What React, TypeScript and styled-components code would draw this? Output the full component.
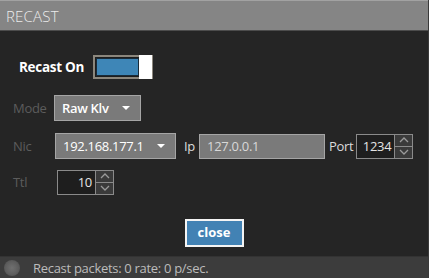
import { FC } from 'react';
import styled, { createGlobalStyle } from 'styled-components';

const GlobalStyle = createGlobalStyle`
    html, body {
        margin: 0;
        padding: 0;
        background: #252525;
    }
    * {
        box-sizing: border-box;
    }
`;

const Window = styled.div`
    width: 429px;
    height: 278px;
    display: flex;
    flex-direction: column;
    background: #252525;
    font-family: 'Open Sans', 'Noto Sans', sans-serif;
    border-right: 1px solid #3a3a3a;
`;

const TitleBar = styled.div`
    height: 31px;
    background: #858585;
    border-top: 1px solid #a2a2a2;
    border-bottom: 1px solid #4c4c4c;
    display: flex;
    align-items: center;
    padding-left: 6px;
    color: #ececec;
    font-size: 15px;
    font-weight: 300;
    letter-spacing: 0.2px;
`;

const Body = styled.div`
    flex: 1;
    display: flex;
    flex-direction: column;
    padding: 24px 0 0 13px;
`;

const ToggleRow = styled.div`
    display: flex;
    align-items: center;
    gap: 9px;
    padding-left: 6px;
    height: 24px;
`;

const ToggleLabel = styled.span`
    color: #ffffff;
    font-weight: 700;
    font-size: 13.5px;
    letter-spacing: -0.3px;
`;

const Toggle = styled.div`
    width: 60px;
    height: 24px;
    border: 2px solid #8c877d;
    background: #1e1e1e;
    padding: 1px;
    display: flex;
`;

const ToggleTrack = styled.div`
    flex: 1;
    background: #3e86b7;
    border: 1px solid #1a2b38;
`;

const ToggleThumb = styled.div`
    width: 13px;
    margin: -3px -2px -3px 0;
    background: #ffffff;
`;

const FormRow = styled.div<{ $top: number }>`
    display: flex;
    align-items: center;
    margin-top: ${(p) => p.$top}px;
    height: 26px;
`;

const Label = styled.span<{ $width?: number; $light?: boolean; $ml?: number; $mr?: number }>`
    width: ${(p) => (p.$width ? `${p.$width}px` : 'auto')};
    margin-left: ${(p) => p.$ml ?? 0}px;
    margin-right: ${(p) => p.$mr ?? 0}px;
    color: ${(p) => (p.$light ? '#dcdcdc' : '#5c5c5c')};
    font-size: 13px;
    letter-spacing: -0.3px;
`;

const Select = styled.div<{ $width: number }>`
    width: ${(p) => p.$width}px;
    height: 26px;
    background: #7a7a7a;
    border: 1px solid #a5a5a5;
    display: flex;
    align-items: center;
    justify-content: space-between;
    padding: 0 10px 0 7px;
    color: #ffffff;
    font-size: 13px;
    letter-spacing: -0.3px;
`;

const SelectText = styled.span<{ $bold?: boolean }>`
    font-weight: ${(p) => (p.$bold ? 600 : 400)};
`;

const Caret = styled.span`
    width: 0;
    height: 0;
    border-left: 4px solid transparent;
    border-right: 4px solid transparent;
    border-top: 4px solid #ffffff;
`;

const TextBox = styled.div<{ $width: number }>`
    width: ${(p) => p.$width}px;
    height: 25px;
    background: #7a7a7a;
    border: 1px solid #a5a5a5;
    display: flex;
    align-items: center;
    padding-left: 7px;
    color: #d8d8d8;
    font-size: 13px;
    letter-spacing: -0.3px;
`;

const Numeric = styled.div<{ $width: number }>`
    width: ${(p) => p.$width}px;
    height: 25px;
    border: 1px solid #8a8a8a;
    background: #1e1e1e;
    display: flex;
`;

const NumericValue = styled.span`
    flex: 1;
    display: flex;
    align-items: center;
    justify-content: flex-end;
    padding-right: 3px;
    color: #e4e4e4;
    font-size: 13px;
    letter-spacing: -0.3px;
`;

const Spinner = styled.div`
    width: 18px;
    display: flex;
    flex-direction: column;
    border-left: 1px solid #8a8a8a;
`;

const SpinButton = styled.div`
    flex: 1;
    background: #3a3a3a;
    display: flex;
    align-items: center;
    justify-content: center;
    & + & {
        border-top: 1px solid #8a8a8a;
    }
`;

const ButtonRow = styled.div`
    display: flex;
    justify-content: center;
    margin-top: 24px;
    padding-right: 13px;
`;

const CloseButton = styled.button`
    width: 59px;
    height: 28px;
    background: #4282b4;
    border: 2px solid #f4f4f4;
    color: #ffffff;
    font-family: inherit;
    font-weight: 700;
    font-size: 13px;
    padding: 0 0 2px;
`;

const StatusBar = styled.div`
    height: 22px;
    background: #3c3c3c;
    border-top: 1px solid #333333;
    display: flex;
    align-items: center;
    gap: 13px;
    padding-left: 4px;
    color: #bcbcbc;
    font-size: 13px;
    letter-spacing: -0.3px;
`;

const Led = styled.span`
    flex-shrink: 0;
    width: 16px;
    height: 16px;
    border-radius: 50%;
    background: radial-gradient(circle, #707070 0%, #5e5e5e 55%, #484848 100%);
`;

const Arrow: FC<{ up?: boolean }> = ({ up }) => (
    <svg width="10" height="6" viewBox="0 0 10 6">
        <path
            d={up ? 'M1 5 L5 1 L9 5' : 'M1 1 L5 5 L9 1'}
            fill="none"
            stroke="#9a9a9a"
            strokeWidth="1.3"
        />
    </svg>
);

const NumberBox: FC<{ value: string; width: number }> = ({ value, width }) => (
    <Numeric $width={width}>
        <NumericValue>{value}</NumericValue>
        <Spinner>
            <SpinButton>
                <Arrow up />
            </SpinButton>
            <SpinButton>
                <Arrow />
            </SpinButton>
        </Spinner>
    </Numeric>
);

const App: FC = () => (
    <>
        <GlobalStyle />
        <Window>
            <TitleBar>RECAST</TitleBar>
            <Body>
                <ToggleRow>
                    <ToggleLabel>Recast On</ToggleLabel>
                    <Toggle>
                        <ToggleTrack />
                        <ToggleThumb />
                    </Toggle>
                </ToggleRow>
                <FormRow $top={16}>
                    <Label $width={41}>Mode</Label>
                    <Select $width={87}>
                        <SelectText $bold>Raw Klv</SelectText>
                        <Caret />
                    </Select>
                </FormRow>
                <FormRow $top={12}>
                    <Label $width={42}>Nic</Label>
                    <Select $width={121}>
                        <SelectText>192.168.177.1</SelectText>
                        <Caret />
                    </Select>
                    <Label $light $ml={8} $mr={4}>
                        Ip
                    </Label>
                    <TextBox $width={126}>127.0.0.1</TextBox>
                    <Label $light $ml={4} $mr={3}>
                        Port
                    </Label>
                    <NumberBox value="1234" width={57} />
                </FormRow>
                <FormRow $top={10}>
                    <Label $width={44}>Ttl</Label>
                    <NumberBox value="10" width={57} />
                </FormRow>
                <ButtonRow>
                    <CloseButton>close</CloseButton>
                </ButtonRow>
            </Body>
            <StatusBar>
                <Led />
                Recast packets: 0 rate: 0 p/sec.
            </StatusBar>
        </Window>
    </>
);

export default App;
